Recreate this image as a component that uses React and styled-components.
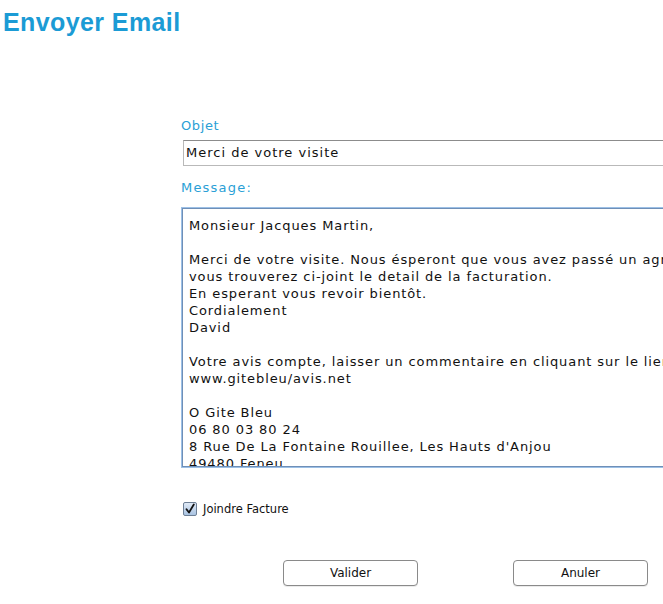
import styled, { createGlobalStyle } from "styled-components";

const messageText = `Monsieur Jacques Martin,

Merci de votre visite. Nous ésperont que vous avez passé un agréable séjour,
vous trouverez ci-joint le detail de la facturation.
En esperant vous revoir bientôt.
Cordialement
David

Votre avis compte, laisser un commentaire en cliquant sur le lien suivant :
www.gitebleu/avis.net

O Gite Bleu
06 80 03 80 24
8 Rue De La Fontaine Rouillee, Les Hauts d'Anjou
49480 Feneu`;

const GlobalStyle = createGlobalStyle`
  html, body {
    margin: 0;
    padding: 0;
    background: #ffffff;
    overflow: hidden;
  }
  body {
    font-family: "DejaVu Sans", "Liberation Sans", sans-serif;
    width: 663px;
    height: 604px;
  }
`;

const Page = styled.div`
  width: 663px;
  height: 604px;
  overflow: hidden;
`;

const Title = styled.h1`
  margin: 0;
  padding: 8px 0 0 3px;
  font-family: "Liberation Sans", Arial, sans-serif;
  font-weight: 700;
  font-size: 25px;
  letter-spacing: 0.4px;
  line-height: 28px;
  color: #1b9bd5;
`;

const Form = styled.div`
  margin: 82px 0 0 181px;
  width: 620px;
  display: flex;
  flex-direction: column;
`;

const Label = styled.label`
  font-family: "DejaVu Sans", sans-serif;
  font-size: 13px;
  line-height: 16px;
  color: #2a9fd6;
  margin-bottom: ${(p) => p.gap || 6}px;
  letter-spacing: ${(p) => p.spacing || 0.6}px;
`;

const TextInput = styled.div`
  margin-left: 2px;
  height: 26px;
  box-sizing: border-box;
  border: 1px solid #b9b9b9;
  border-top-color: #8c8c8c;
  padding: 0 2px;
  font-size: 13px;
  letter-spacing: 1px;
  line-height: 24px;
  color: #111;
  margin-bottom: 14px;
`;

const MessageBox = styled.div`
  margin-left: 1px;
  height: 259px;
  box-sizing: border-box;
  border: 1px solid #6f8fb7;
  box-shadow: 0 0 0 1px #9cc0e6;
  padding: 8px 6px 0;
  font-size: 13px;
  letter-spacing: 0.9px;
  line-height: 17px;
  color: #111;
  white-space: pre;
  overflow: hidden;
`;

const CheckRow = styled.div`
  display: flex;
  align-items: center;
  gap: 6px;
  margin: 35px 0 0 2px;
  font-size: 11.5px;
  color: #111;
`;

const CheckBox = styled.span`
  width: 14px;
  height: 14px;
  box-sizing: border-box;
  border: 1px solid #6d7f95;
  border-radius: 2px;
  background: linear-gradient(#dfe9f5, #a9c3e2);
  display: flex;
  align-items: center;
  justify-content: center;
`;

const Buttons = styled.div`
  display: flex;
  gap: 95px;
  margin: 44px 0 0 102px;
`;

const Button = styled.button`
  width: 135px;
  height: 26px;
  box-sizing: border-box;
  border: 1px solid #8a8a8a;
  border-radius: 4px;
  background: #ffffff;
  font-family: "DejaVu Sans", sans-serif;
  font-size: 12px;
  color: #111;
  padding: 0;
  box-shadow: 0 1px 0 rgba(0, 0, 0, 0.08);
`;

export default function App() {
  return (
    <Page>
      <GlobalStyle />
      <Title>Envoyer Email</Title>
      <Form>
        <Label>Objet</Label>
        <TextInput>Merci de votre visite</TextInput>
        <Label gap={12} spacing={1.2}>Message:</Label>
        <MessageBox>{messageText}</MessageBox>
        <CheckRow>
          <CheckBox>
            <svg width="12" height="12" viewBox="0 0 12 12">
              <path
                d="M2.5 6.2 L5 9.5 L9.8 1.5"
                fill="none"
                stroke="#111"
                strokeWidth="1.8"
                strokeLinecap="round"
                strokeLinejoin="round"
              />
            </svg>
          </CheckBox>
          <span>Joindre Facture</span>
        </CheckRow>
        <Buttons>
          <Button>Valider</Button>
          <Button>Anuler</Button>
        </Buttons>
      </Form>
    </Page>
  );
}
